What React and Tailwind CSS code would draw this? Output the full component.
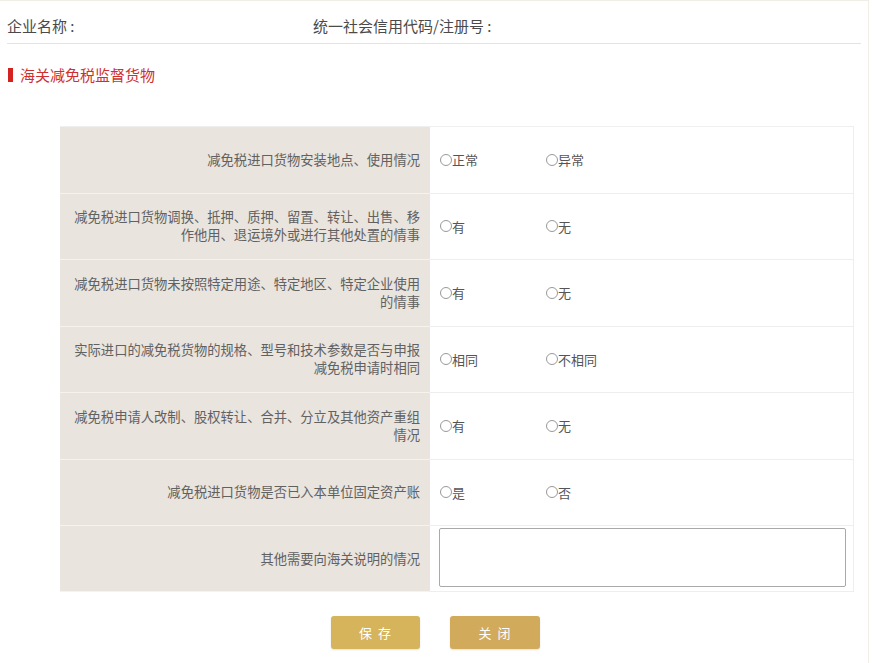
import React from "react";

const rows = [
  { label: "减免税进口货物安装地点、使用情况", opts: ["正常", "异常"] },
  { label: "减免税进口货物调换、抵押、质押、留置、转让、出售、移作他用、退运境外或进行其他处置的情事", opts: ["有", "无"] },
  { label: "减免税进口货物未按照特定用途、特定地区、特定企业使用的情事", opts: ["有", "无"] },
  { label: "实际进口的减免税货物的规格、型号和技术参数是否与申报减免税申请时相同", opts: ["相同", "不相同"] },
  { label: "减免税申请人改制、股权转让、合并、分立及其他资产重组情况", opts: ["有", "无"] },
  { label: "减免税进口货物是否已入本单位固定资产账", opts: ["是", "否"] },
];

function Radio({ text }) {
  return (
    <label className="w-[106px] flex items-center text-[13px] text-[#555]">
      <span className="w-[12px] h-[12px] rounded-full border border-[#999] bg-white" />
      <span>{text}</span>
    </label>
  );
}

export default function App() {
  return (
    <div
      className="w-[873px] h-[663px] bg-white overflow-hidden"
      style={{ fontFamily: '"Noto Sans CJK SC", "Noto Sans", sans-serif' }}
    >
      <div className="w-[869px] h-[663px] border-r border-t border-[#f1eee8]">
        <div className="mx-[7px] h-[43px] border-b border-[#e3e3e3] flex items-center pt-[9px] text-[15px] text-[#4a4a4a]">
          <div className="w-[306px]">企业名称 :</div>
          <div>统一社会信用代码/注册号 :</div>
        </div>
        <div className="mt-[22px] ml-[8px] flex items-center h-[18px]">
          <span className="w-[5px] h-[14px] bg-[#d4221f]" />
          <span className="ml-[7px] text-[15px] text-[#cf2f2f] leading-[18px]">海关减免税监督货物</span>
        </div>
        <div className="mt-[42px] ml-[60px] w-[794px] border-t border-[#efefef]">
          {rows.map((r, i) => (
            <div key={i} className="flex h-[66.5px]">
              <div className="w-[370px] bg-[#e9e4de] border-b border-[#f6f3ef] flex items-center justify-end pl-[12px] pr-[10px] text-right text-[13.3px] leading-[18px] text-[#616161]">
                <div>{r.label}</div>
              </div>
              <div className="flex-1 border-b border-r border-[#eeeeee] flex items-center pl-[10px]">
                {r.opts.map((o) => (
                  <Radio key={o} text={o} />
                ))}
              </div>
            </div>
          ))}
          <div className="flex h-[66px]">
            <div className="w-[370px] bg-[#e9e4de] border-b border-[#f6f3ef] flex items-center justify-end pl-[12px] pr-[10px] text-[13.3px] leading-[18px] text-[#616161]">
              其他需要向海关说明的情况
            </div>
            <div className="flex-1 border-b border-r border-[#eeeeee] pl-[9px] pr-[7px] pt-[2px]">
              <textarea className="w-full h-[59px] border border-[#a9a9a9] rounded-[2px] resize-none outline-none" />
            </div>
          </div>
        </div>
        <div className="mt-[24px] flex justify-center gap-[30px] pl-[2px]">
          <button className="w-[89px] h-[33px] rounded-[3px] bg-[#d5b45c] text-white text-[13px] tracking-[6px] pl-[6px] shadow-[0_1px_2px_rgba(0,0,0,0.12)]">
            保存
          </button>
          <button className="w-[90px] h-[33px] rounded-[3px] bg-[#d2aa5c] text-white text-[13px] tracking-[6px] pl-[6px] shadow-[0_1px_2px_rgba(0,0,0,0.12)]">
            关闭
          </button>
        </div>
      </div>
    </div>
  );
}
